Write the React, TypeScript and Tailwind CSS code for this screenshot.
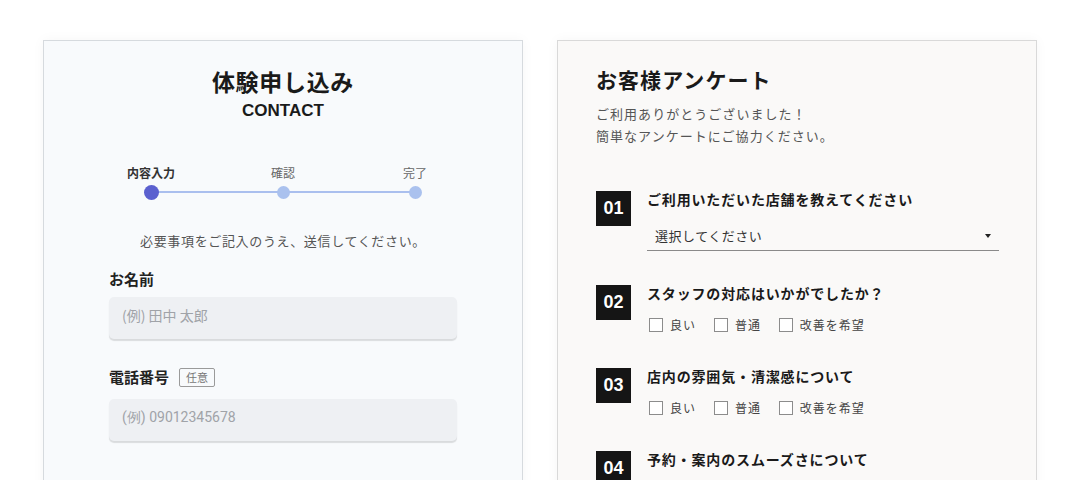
const JP = "font-['Noto_Sans_CJK_JP','Noto_Sans',sans-serif]";

const STEPS = [
  { label: "内容入力", active: true },
  { label: "確認", active: false },
  { label: "完了", active: false },
];

const QUESTIONS = [
  { no: "01", text: "ご利用いただいた店舗を教えてください", kind: "select" },
  { no: "02", text: "スタッフの対応はいかがでしたか？", kind: "check" },
  { no: "03", text: "店内の雰囲気・清潔感について", kind: "check" },
  { no: "04", text: "予約・案内のスムーズさについて", kind: "none" },
] as const;

const OPTIONS = ["良い", "普通", "改善を希望"];

function Steps() {
  return (
    <div className="relative mx-auto mt-[43px] flex w-[396px]">
      <div className="absolute left-[66px] right-[66px] top-[26px] h-[2px] bg-[#aabfee]" />
      {STEPS.map((s) => (
        <div key={s.label} className="relative flex w-[132px] flex-col items-center">
          <span
            className={
              s.active
                ? "h-4 text-[12px] leading-4 font-bold text-[#333]"
                : "h-4 text-[12px] leading-4 text-[#666]"
            }
          >
            {s.label}
          </span>
          <div className="mt-[4px] flex h-[14px] items-center">
            {s.active ? (
              <span className="h-[15px] w-[15px] rounded-full bg-[#5b60cf]" />
            ) : (
              <span className="h-[13px] w-[13px] rounded-full bg-[#aac1ee]" />
            )}
          </div>
        </div>
      ))}
    </div>
  );
}

function ContactCard() {
  return (
    <div className="h-[520px] w-[480px] shrink-0 border border-[#d6dade] bg-[#f8fafc] pt-6 shadow-[0_0_12px_rgba(0,0,0,0.04)]">
      <h1 className="text-center text-[23px] leading-8 font-bold tracking-[0.03em] text-[#1a1a1a]">体験申し込み</h1>
      <p className="mt-[3px] text-center font-['Liberation_Sans',sans-serif] text-[17px] leading-[22px] font-bold text-[#1a1a1a]">
        CONTACT
      </p>

      <Steps />

      <p className="mt-[32px] text-center text-[13px] leading-5 tracking-[0.05em] text-[#555]">
        必要事項をご記入のうえ、送信してください。
      </p>

      <div className="mx-[65px] mt-[17px] flex flex-col">
        <label className="text-[15px] leading-[22px] font-bold text-[#222]">お名前</label>
        <div className="mt-[7px] flex h-[42px] items-center rounded-[5px] bg-[#eef0f3] px-[13px] pb-[5px] shadow-[0_2px_1px_rgba(0,0,0,0.12)]">
          <span className="text-[14px] text-[#a0a3a8]">(例) 田中 太郎</span>
        </div>

        <div className="mt-[27px] flex h-[22px] items-center gap-[10px]">
          <label className="text-[15px] leading-[22px] font-bold text-[#222]">電話番号</label>
          <span className="flex h-[19px] w-[36px] items-center justify-center rounded-[2px] border border-[#9a9a9a] text-[11px] text-[#777]">
            任意
          </span>
        </div>
        <div className="mt-[11px] flex h-[42px] items-center rounded-[5px] bg-[#eef0f3] px-[13px] pb-[5px] shadow-[0_2px_1px_rgba(0,0,0,0.12)]">
          <span className="font-['Roboto',sans-serif] text-[14px] text-[#a0a3a8]">(例) 09012345678</span>
        </div>
      </div>
    </div>
  );
}

function SurveyCard() {
  return (
    <div className="h-[520px] w-[480px] shrink-0 border border-[#d9d9d9] bg-[#faf9f8] pl-[38px] pr-[37px] pt-[23px] shadow-[0_0_12px_rgba(0,0,0,0.04)]">
      <h2 className="text-[21px] leading-[30px] font-bold tracking-[0.05em] text-[#1a1a1a]">お客様アンケート</h2>
      <p className="mt-[9px] text-[13px] leading-[22px] tracking-[0.08em] text-[#555]">
        ご利用ありがとうございました！
        <br />
        簡単なアンケートにご協力ください。
      </p>

      <div className="mt-[44px] flex flex-col gap-[34px]">
        {QUESTIONS.map((q) => (
          <div key={q.no} className="flex gap-4">
            <div className="flex h-[35px] w-[35px] shrink-0 items-center justify-center bg-[#151515] font-['Liberation_Sans',sans-serif] text-[18px] font-bold text-white">
              {q.no}
            </div>
            <div className="flex flex-1 flex-col">
              <p className="text-[14px] leading-4 font-bold tracking-[0.06em] text-[#1a1a1a]">{q.text}</p>
              {q.kind === "select" && (
                <div className="mt-[14px] flex h-[30px] items-center justify-between border-b border-[#8a8a8a] pl-2 pr-2">
                  <span className="text-[13px] tracking-[0.04em] text-[#333]">選択してください</span>
                  <span className="h-0 w-0 border-x-[3px] border-t-[4px] border-x-transparent border-t-[#222]" />
                </div>
              )}
              {q.kind === "check" && (
                <div className="mt-[15px] flex h-[18px] items-center gap-[18px] pl-[2px]">
                  {OPTIONS.map((o) => (
                    <div key={o} className="flex items-center gap-[7px]">
                      <span className="h-[14px] w-[14px] border-[1.5px] border-[#8c8c8c] bg-white" />
                      <span className="text-[12px] tracking-[0.08em] text-[#444]">{o}</span>
                    </div>
                  ))}
                </div>
              )}
            </div>
          </div>
        ))}
      </div>
    </div>
  );
}

export default function App() {
  return (
    <div className={`${JP} flex h-[480px] justify-center gap-[34px] overflow-hidden bg-white pt-10`}>
      <ContactCard />
      <SurveyCard />
    </div>
  );
}
